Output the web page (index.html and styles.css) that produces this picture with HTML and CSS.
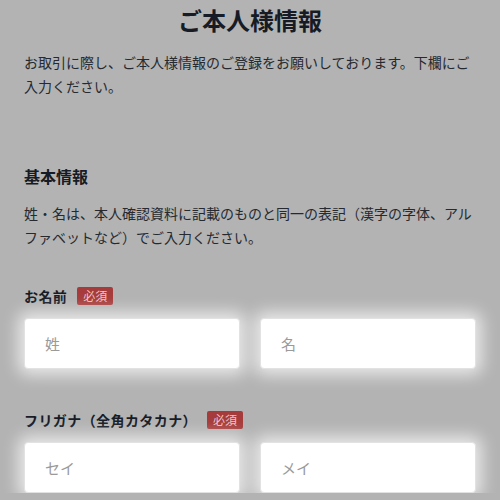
FILE: index.html
```html
<!DOCTYPE html>
<html lang="ja">
<head>
  <meta charset="UTF-8" />
  <meta name="viewport" content="width=device-width, initial-scale=1" />
  <title>ご本人様情報</title>
  <link rel="stylesheet" href="styles.css">
</head>
<body>
  <div class="page">
    <h1 class="page-title">ご本人様情報</h1>
    <p class="lead">お取引に際し、ご本人様情報のご登録をお願いしております。下欄にご入力ください。</p>

    <section class="section">
      <h2 class="section-title">基本情報</h2>
      <p class="note">姓・名は、本人確認資料に記載のものと同一の表記（漢字の字体、アルファベットなど）でご入力ください。</p>

      <div class="field">
        <div class="field-label">お名前 <span class="badge">必須</span></div>
        <div class="input-row">
          <input class="text-input" type="text" placeholder="姓" />
          <input class="text-input" type="text" placeholder="名" />
        </div>
      </div>

      <div class="field field-kana">
        <div class="field-label">フリガナ（全角カタカナ） <span class="badge">必須</span></div>
        <div class="input-row">
          <input class="text-input" type="text" placeholder="セイ" />
          <input class="text-input" type="text" placeholder="メイ" />
        </div>
      </div>
    </section>
  </div>
</body>
</html>
```

FILE: styles.css
```css
body {
  margin: 0;
  background: #b3b3b3;
  font-family: "Noto Sans CJK JP", "Noto Sans", sans-serif;
  color: #161b26;
}
.page {
  padding: 0 24px;
}
.page-title {
  margin: 0;
  font-size: 24px;
  line-height: 40px;
  font-weight: 700;
  text-align: center;
}
.lead {
  margin: 10px 0 0;
  font-size: 14px;
  line-height: 24px;
  color: #262a30;
}
.section {
  margin-top: 66px;
}
.section-title {
  margin: 0;
  font-size: 16px;
  line-height: 24px;
  font-weight: 700;
}
.note {
  margin: 13px 0 0;
  font-size: 14px;
  line-height: 24px;
  color: #262a30;
}
.field {
  margin-top: 37px;
}
.field-kana {
  margin-top: 41px;
}
.field-label {
  display: flex;
  align-items: center;
  gap: 10px;
  height: 20px;
  font-size: 14px;
  font-weight: 700;
  letter-spacing: 0.03em;
}
.badge {
  display: inline-block;
  background: #a63b3b;
  color: #ecc4c4;
  font-size: 12px;
  font-weight: 400;
  line-height: 18px;
  letter-spacing: 0;
  padding: 0 6px;
  border-radius: 2px;
}
.input-row {
  display: flex;
  gap: 20px;
  margin-top: 12px;
}
.text-input {
  flex: 1;
  min-width: 0;
  height: 51px;
  box-sizing: border-box;
  padding: 0 20px;
  background: #fff;
  border: 1px solid #e2e2e2;
  border-radius: 4px;
  box-shadow: 0 0 16px 6px rgba(255, 255, 255, 0.7);
  font-family: inherit;
  font-size: 15px;
  color: #333;
}
.text-input::placeholder {
  color: #9a9a9a;
}
```
